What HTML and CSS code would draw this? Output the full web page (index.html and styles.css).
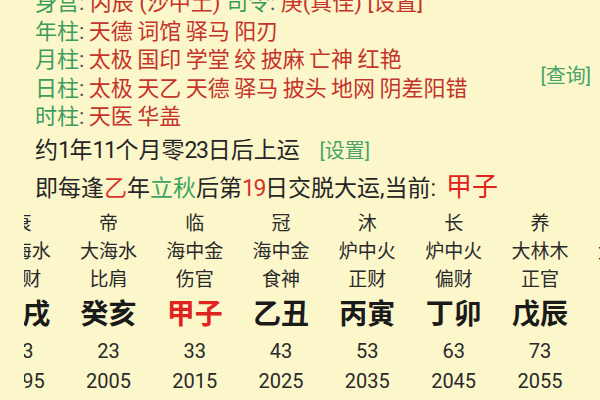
FILE: index.html
```html
<!DOCTYPE html>
<html lang="zh-CN">
<head>
<meta charset="utf-8">
<title>大运</title>
<link rel="stylesheet" href="styles.css">
</head>
<body>
<div class="page">
  <div class="info">
    <div class="line"><span class="lbl">身宫</span><span class="sep">: </span><span class="red">丙辰 (沙中土) </span><span class="lbl">司令</span><span class="sep">: </span><span class="red">庚(真佳) [设置]</span></div>
    <div class="pillars">
      <div class="plist">
        <div class="line tight"><span class="lbl">年柱</span><span class="sep">: </span><span class="red">天德 词馆 驿马 阳刃</span></div>
        <div class="line tight"><span class="lbl">月柱</span><span class="sep">: </span><span class="red">太极 国印 学堂 绞 披麻 亡神 红艳</span></div>
        <div class="line tight"><span class="lbl">日柱</span><span class="sep">: </span><span class="red">太极 天乙 天德 驿马 披头 地网 阴差阳错</span></div>
        <div class="line tight"><span class="lbl">时柱</span><span class="sep">: </span><span class="red">天医 华盖</span></div>
      </div>
      <span class="query">[查询]</span>
    </div>
  </div>
  <div class="yun">
    <div class="yline">约<span class="num">1</span>年<span class="num">11</span>个月零<span class="num">23</span>日后上运 <span class="set">[设置]</span></div>
    <div class="yline">即每逢<span class="hl-red">乙</span>年<span class="hl-green">立秋</span>后第<span class="hl-red num">19</span>日交脱大运,当前: <span class="cur">甲子</span></div>
  </div>
  <div class="dayun-wrap">
    <div class="dayun">
      <div class="col"><div class="r1">衰</div><div class="r2">大海水</div><div class="r3">劫财</div><div class="r4">壬戌</div><div class="r5">13</div><div class="r6">1995</div></div>
      <div class="col"><div class="r1">帝</div><div class="r2">大海水</div><div class="r3">比肩</div><div class="r4">癸亥</div><div class="r5">23</div><div class="r6">2005</div></div>
      <div class="col"><div class="r1">临</div><div class="r2">海中金</div><div class="r3">伤官</div><div class="r4 now">甲子</div><div class="r5">33</div><div class="r6">2015</div></div>
      <div class="col"><div class="r1">冠</div><div class="r2">海中金</div><div class="r3">食神</div><div class="r4">乙丑</div><div class="r5">43</div><div class="r6">2025</div></div>
      <div class="col"><div class="r1">沐</div><div class="r2">炉中火</div><div class="r3">正财</div><div class="r4">丙寅</div><div class="r5">53</div><div class="r6">2035</div></div>
      <div class="col"><div class="r1">长</div><div class="r2">炉中火</div><div class="r3">偏财</div><div class="r4">丁卯</div><div class="r5">63</div><div class="r6">2045</div></div>
      <div class="col"><div class="r1">养</div><div class="r2">大林木</div><div class="r3">正官</div><div class="r4">戊辰</div><div class="r5">73</div><div class="r6">2055</div></div>
      <div class="col"><div class="r1">胎</div><div class="r2">大林木</div><div class="r3">七杀</div><div class="r4">己巳</div><div class="r5">83</div><div class="r6">2065</div></div>
    </div>
  </div>
</div>
</body>
</html>
```
FILE: styles.css
```css
html, body {
  margin: 0;
  padding: 0;
}
body {
  width: 600px;
  height: 400px;
  overflow: hidden;
  background: #fcf7cb;
  font-family: Roboto, "Noto Sans CJK SC", sans-serif;
  color: #262626;
}
.page {
  width: 600px;
}
.info {
  margin-top: -11px;
  padding-left: 35px;
  padding-right: 9px;
  font-size: 22px;
}
.line {
  height: 28.5px;
  line-height: 28.5px;
  white-space: nowrap;
}
.line.tight { word-spacing: -1px; }
.lbl { color: #3c9c5e; }
.sep { color: #555; }
.red { color: #c4342c; }
.pillars {
  display: flex;
  align-items: center;
  justify-content: space-between;
}
.query {
  color: #4aa46a;
  font-size: 20px;
}
.yun {
  padding-left: 35px;
  font-size: 23px;
  color: #262626;
}
.yline {
  height: 37px;
  line-height: 37px;
  white-space: nowrap;
}
.num { letter-spacing: -1.4px; }
.set {
  color: #4aa46a;
  font-size: 20px;
  margin-left: 14px;
}
.hl-red { color: #d8332b; }
.hl-green { color: #3ea462; }
.cur {
  color: #e0231f;
  font-size: 26px;
  margin-left: 4px;
}
.dayun-wrap {
  margin-top: 4.5px;
  margin-left: 24px;
  width: 576px;
  overflow: hidden;
}
.dayun {
  display: flex;
  margin-left: -45px;
  width: 800px;
}
.col {
  flex: 0 0 86.3px;
  text-align: center;
  white-space: nowrap;
  color: #2a2a2a;
}
.r1, .r2, .r3 {
  height: 28px;
  line-height: 28px;
  font-size: 19px;
}
.r4 {
  height: 42px;
  line-height: 42px;
  font-size: 28px;
  font-weight: bold;
  color: #1a1a1a;
}
.r4.now { color: #e0231f; }
.r5, .r6 {
  height: 30px;
  line-height: 30px;
  font-size: 20px;
}
```
